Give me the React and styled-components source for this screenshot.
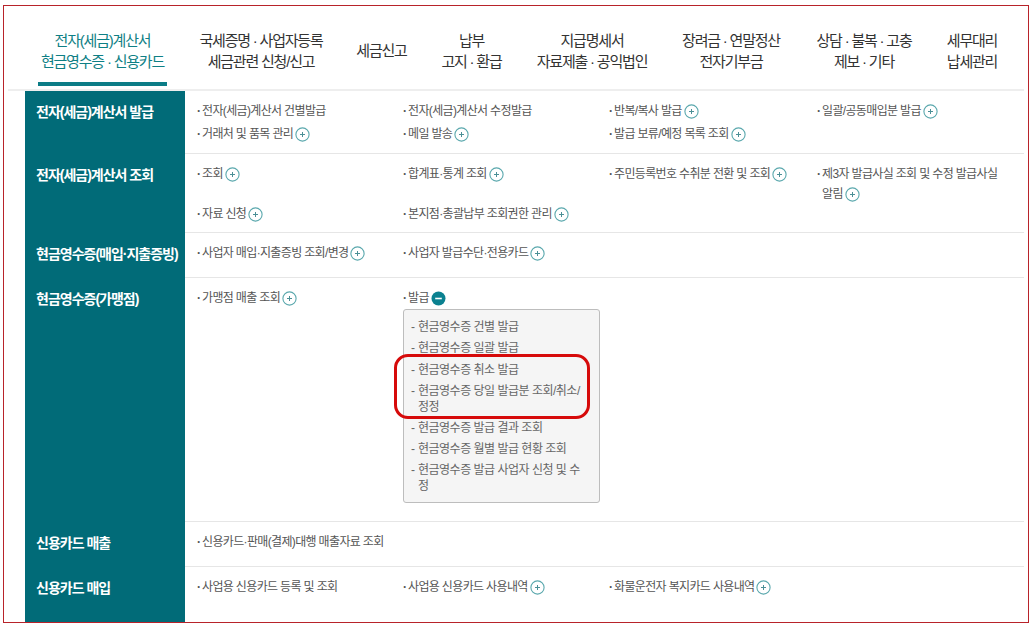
import React from "react";
import styled, { createGlobalStyle } from "styled-components";

const Global = createGlobalStyle`
  html, body { margin: 0; padding: 0; background: #fff; }
  body { font-family: "Liberation Sans", "Noto Sans CJK KR", sans-serif; }
`;

const Frame = styled.div`
  box-sizing: border-box;
  width: 1026px;
  height: 618px;
  margin: 5px 0 0 3px;
  border: 1px solid #b8232a;
  overflow: hidden;
`;

const Nav = styled.nav`
  box-sizing: border-box;
  height: 85px;
  margin: 0 4px;
  padding: 24px 0 0 30px;
  display: flex;
  gap: 35px;
  border-bottom: 2px solid #eee;
`;

const NavItem = styled.div`
  flex: none;
  box-sizing: border-box;
  width: ${(p) => p.$w}px;
  height: 56px;
  text-align: center;
  white-space: nowrap;
  font-size: 15px;
  line-height: 21px;
  letter-spacing: -1.2px;
  align-self: flex-start;
  padding-top: ${(p) => (p.$single ? 10 : 0)}px;
  color: ${(p) => (p.$active ? "#0f7f85" : "#333")};
  border-bottom: ${(p) => (p.$active ? "4px solid #0b7c86" : "none")};
  margin-right: ${(p) => (p.$active ? "-2px" : "0")};
  display: flex;
  flex-direction: column;
  align-items: center;
`;

const Table = styled.div`
  margin: 0 4px 0 21px;
`;

const Row = styled.section`
  display: grid;
  grid-template-columns: 160px 1fr;
  height: ${(p) => p.$h}px;
`;

const Label = styled.h3`
  margin: 0;
  padding: 11px 0 0 11px;
  background: #016b78;
  color: #fff;
  font-size: 14px;
  font-weight: 700;
  line-height: 20px;
  letter-spacing: -1px;
  white-space: nowrap;
`;

const Cells = styled.div`
  box-sizing: border-box;
  display: grid;
  grid-template-columns: 206px 206px 208px 190px;
  align-content: start;
  row-gap: ${(p) => p.$gap ?? 3}px;
  padding: 10px 0 0 12px;
  border-bottom: 1px solid #e6e6e6;
`;

const Item = styled.div`
  position: relative;
  grid-column: ${(p) => (p.$wide ? "1 / span 2" : "auto")};
  padding: 0 4px 0 5px;
  color: #555;
  font-size: 12px;
  line-height: 20px;
  letter-spacing: -0.65px;

  &::before {
    content: "·";
    position: absolute;
    left: 0;
    top: 0;
    font-weight: 700;
  }
`;

const Circle = styled.svg`
  width: 15px;
  height: 15px;
  margin-left: 2px;
  vertical-align: -4px;
`;

const Plus = () => (
  <Circle viewBox="0 0 15 15" fill="none" aria-hidden="true">
    <circle cx="7.5" cy="7.5" r="6.6" stroke="#5aa8ad" strokeWidth="1.1" />
    <path d="M7.5 5v5M5 7.5h5" stroke="#4b8f96" strokeWidth="1" />
  </Circle>
);

const Minus = () => (
  <Circle viewBox="0 0 15 15" aria-hidden="true">
    <circle cx="7.5" cy="7.5" r="7" fill="#0b8190" />
    <path d="M4.2 7.5h6.6" stroke="#fff" strokeWidth="1.6" />
  </Circle>
);

const Popup = styled.div`
  position: relative;
  box-sizing: border-box;
  width: 197px;
  height: 194px;
  margin: 1px 0 0 0;
  padding: 9px 14px 0 7px;
  background: #f5f5f5;
  border: 1px solid #bdbdbd;
  border-radius: 3px;
`;

const PopupItem = styled.div`
  position: relative;
  padding-left: 7px;
  margin-bottom: 5px;
  color: #666;
  font-size: 12px;
  line-height: 16px;
  letter-spacing: -0.5px;

  &:nth-child(3) {
    margin-top: 6px;
  }

  &::before {
    content: "-";
    position: absolute;
    left: 0;
    top: 0;
  }
`;

const Highlight = styled.div`
  position: absolute;
  left: -10px;
  top: 44px;
  box-sizing: border-box;
  width: 196px;
  height: 65px;
  border: 3px solid #d60a0a;
  border-radius: 14px;
  pointer-events: none;
`;

const nav = [
  { w: 129, lines: ["전자(세금)계산서", "현금영수증 · 신용카드"], active: true },
  { w: 122, lines: ["국세증명 · 사업자등록", "세금관련 신청/신고"] },
  { w: 49, lines: ["세금신고"], single: true },
  { w: 61, lines: ["납부", "고지 · 환급"] },
  { w: 110, lines: ["지급명세서", "자료제출 · 공익법인"] },
  { w: 98, lines: ["장려금 · 연말정산", "전자기부금"] },
  { w: 98, lines: ["상담 · 불복 · 고충", "제보 · 기타"] },
  { w: 48, lines: ["세무대리", "납세관리"] },
];

const popupItems = [
  "현금영수증 건별 발급",
  "현금영수증 일괄 발급",
  "현금영수증 취소 발급",
  "현금영수증 당일 발급분 조회/취소/정정",
  "현금영수증 발급 결과 조회",
  "현금영수증 월별 발급 현황 조회",
  "현금영수증 발급 사업자 신청 및 수정",
];

const P = ({ children }) => (
  <Item>
    {children}
    <Plus />
  </Item>
);

export default function App() {
  return (
    <Frame>
      <Global />
      <Nav>
        {nav.map((n) => (
          <NavItem key={n.lines[0]} $w={n.w} $active={n.active} $single={n.single}>
            {n.lines.map((l) => (
              <span key={l}>{l}</span>
            ))}
          </NavItem>
        ))}
      </Nav>
      <Table>
        <Row $h={63}>
          <Label>전자(세금)계산서 발급</Label>
          <Cells>
            <Item>전자(세금)계산서 건별발급</Item>
            <Item>전자(세금)계산서 수정발급</Item>
            <P>반복/복사 발급</P>
            <P>일괄/공동매입분 발급</P>
            <P>거래처 및 품목 관리</P>
            <P>메일 발송</P>
            <P>발급 보류/예정 목록 조회</P>
          </Cells>
        </Row>
        <Row $h={79}>
          <Label>전자(세금)계산서 조회</Label>
          <Cells $gap={0}>
            <P>조회</P>
            <P>합계표·통계 조회</P>
            <P>주민등록번호 수취분 전환 및 조회</P>
            <P>제3자 발급사실 조회 및 수정 발급사실 알림</P>
            <P>자료 신청</P>
            <P>본지점·총괄납부 조회권한 관리</P>
          </Cells>
        </Row>
        <Row $h={45}>
          <Label>현금영수증(매입·지출증빙)</Label>
          <Cells>
            <P>사업자 매입·지출증빙 조회/변경</P>
            <P>사업자 발급수단·전용카드</P>
          </Cells>
        </Row>
        <Row $h={244}>
          <Label>현금영수증(가맹점)</Label>
          <Cells>
            <P>가맹점 매출 조회</P>
            <div>
              <Item>
                발급
                <Minus />
              </Item>
              <Popup>
                {popupItems.map((t) => (
                  <PopupItem key={t}>{t}</PopupItem>
                ))}
                <Highlight />
              </Popup>
            </div>
          </Cells>
        </Row>
        <Row $h={45}>
          <Label>신용카드 매출</Label>
          <Cells>
            <Item $wide>신용카드·판매(결제)대행 매출자료 조회</Item>
          </Cells>
        </Row>
        <Row $h={60}>
          <Label>신용카드 매입</Label>
          <Cells>
            <Item>사업용 신용카드 등록 및 조회</Item>
            <P>사업용 신용카드 사용내역</P>
            <P>화물운전자 복지카드 사용내역</P>
          </Cells>
        </Row>
      </Table>
    </Frame>
  );
}
